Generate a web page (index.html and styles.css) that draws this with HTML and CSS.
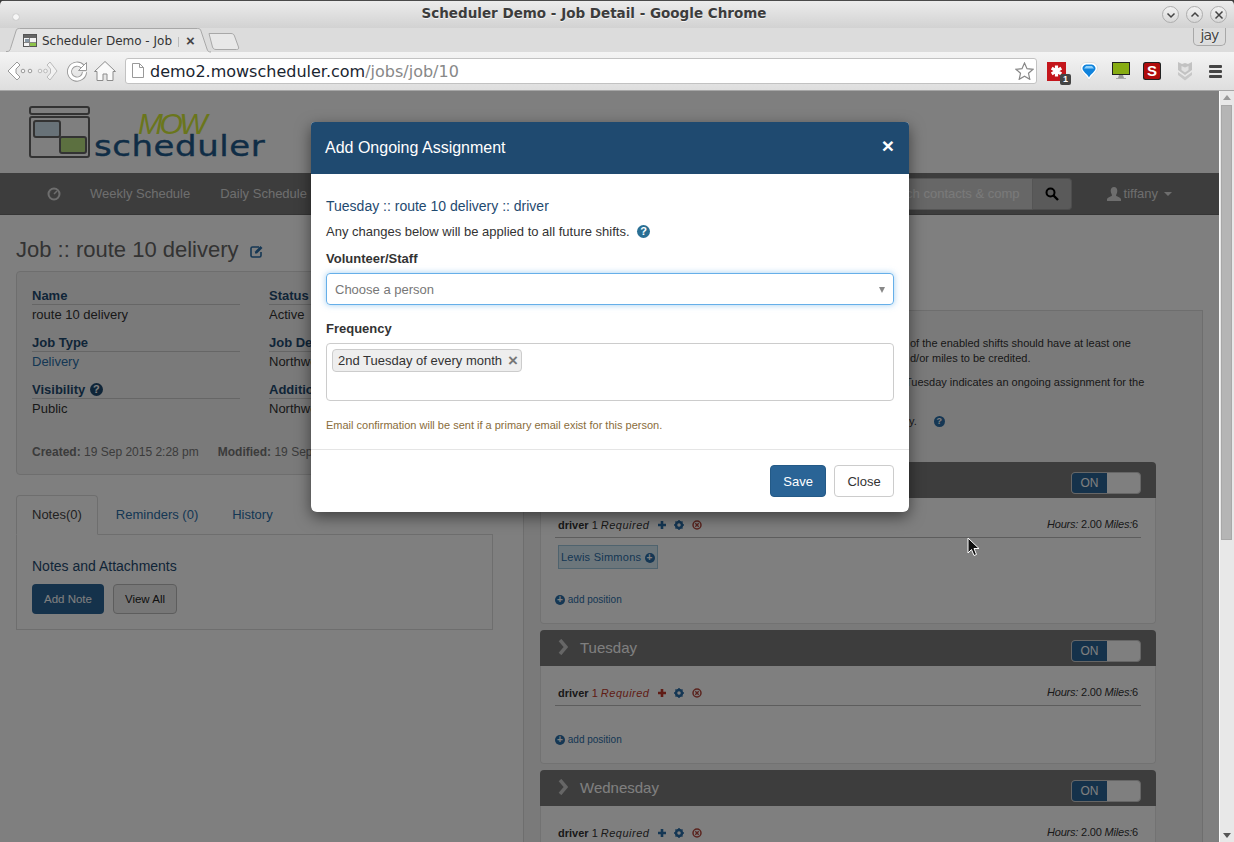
FILE: index.html
```html
<!DOCTYPE html>
<html lang="en">
<head>
    <meta charset="UTF-8">
    <title>Scheduler Demo - Job Detail - Google Chrome</title>
    <link rel="stylesheet" href="styles.css">
</head>
<body>
<div class="window">
    <div class="titlebar">
        <span class="title-dot"></span>
        <span class="title-text">Scheduler Demo - Job Detail - Google Chrome</span>
        <div class="win-buttons">
            <span class="win-btn"><svg width="10" height="10" viewBox="0 0 10 10"><path d="M1.5 3.5 5 7l3.5-3.5" class="win-glyph"/></svg></span>
            <span class="win-btn"><svg width="10" height="10" viewBox="0 0 10 10"><path d="M1.5 6.5 5 3l3.5 3.5" class="win-glyph"/></svg></span>
            <span class="win-btn"><svg width="10" height="10" viewBox="0 0 10 10"><path d="M1.5 1.5l7 7M8.5 1.5l-7 7" class="win-glyph"/></svg></span>
        </div>
    </div>
    <div class="tabbar">
        <div class="tab">
            <svg class="tab-shape" width="206" height="25" viewBox="0 0 206 25"><path d="M0 23.500h1c2 0 3-1 3.500-3L10 3c.5-2 1.500-2.500 3.500-2.500h178c2 0 3 .5 3.500 2.500l6 18c.5 2 1.500 3 4 3" fill="#e4e4e4" stroke="#a8a8a8"/></svg>
            <svg class="favicon" width="14" height="13" viewBox="0 0 14 13"><rect x=".5" y=".5" width="13" height="12" fill="#f4f4f4" stroke="#555"/><rect x="1" y="1" width="12" height="3" fill="#666"/><rect x="2" y="5" width="4" height="3" fill="#8797a5"/><rect x="7" y="8.500" width="6" height="3.500" fill="#8fc44a"/><path d="M6.500 4v8.500M1 8.500h12" stroke="#888"/></svg>
            <span class="tab-title">Scheduler Demo - Job</span>
            <span class="tab-close">×</span>
        </div>
        <svg class="newtab" width="32" height="17" viewBox="0 0 32 17"><path d="M1 .5h22c2 0 3 1 3.500 2.500l4 11c.5 1.500 0 2.500-2 2.500H8c-2 0-3-1-3.500-2.500L1 .5z" fill="#e8e8e8" stroke="#a8a8a8"/></svg>
        <span class="profile">jay</span>
    </div>
    <div class="toolbar">
        <div class="nav-icons">
            <svg width="32" height="24" viewBox="0 0 32 24"><path d="M11 3 2 12l9 9 3-3-4-4V10l4-4z" fill="#fff" stroke="#999"/><circle cx="17" cy="12" r="1.800" fill="#f6f6f6" stroke="#999"/><circle cx="24" cy="12" r="1.800" fill="#f6f6f6" stroke="#999"/></svg>
            <svg class="nav-forward" width="22" height="24" viewBox="0 0 22 24"><path d="M13 3l7 9-7 9-3-3 3.500-4v-4L10 6z" fill="#f2f2f2" stroke="#bbb"/><circle cx="3" cy="12" r="1.800" fill="#f2f2f2" stroke="#bbb"/><circle cx="8.500" cy="12" r="1.800" fill="#f2f2f2" stroke="#bbb"/></svg>
            <svg class="nav-reload" width="22" height="24" viewBox="0 0 22 24"><path d="M16.500 7.500A7.500 7.500 0 1 0 18.500 13" fill="none" stroke="#999" stroke-width="5"/><path d="M16.500 7.500A7.500 7.500 0 1 0 18.500 13" fill="none" stroke="#fff" stroke-width="3.200"/><path d="M12.500 11.500H20.500V3.500z" fill="#fff" stroke="#999"/></svg>
            <svg class="nav-home" width="24" height="24" viewBox="0 0 24 24"><path d="M12 2.500 1.500 12.500H4v9h6V15h4v6.500h6v-9h2.500z" fill="#fafafa" stroke="#8c8c8c"/></svg>
        </div>
        <div class="omnibox">
            <svg width="12" height="15" viewBox="0 0 12 15"><path d="M.5.5h7l4 4v10H.5z" fill="#fff" stroke="#999"/><path d="M7.500.5v4h4" fill="none" stroke="#999"/></svg>
            <span class="url">demo2.mowscheduler.com<span class="url-path">/jobs/job/10</span></span>
            <svg class="star" width="19" height="18" viewBox="0 0 19 18"><path d="M9.500 1l2.500 5.700 6 .6-4.500 4 1.300 6-5.300-3.100-5.300 3.100 1.300-6-4.500-4 6-.6z" fill="#fff" stroke="#888" stroke-width="1.200"/></svg>
        </div>
        <div class="ext-icons">
            <span class="ext ext-lastpass">
                <svg width="19" height="19" viewBox="0 0 19 19"><rect width="19" height="19" fill="#c4161c"/><path d="M9.500 3.500v11M4.700 6.200l9.600 5.600M14.300 6.200l-9.600 5.600" stroke="#fff" stroke-width="3.200"/></svg>
                <span class="ext-badge">1</span>
            </span>
            <svg class="ext" width="18" height="19" viewBox="0 0 18 19"><path d="M9 18.500C6 13 .5 10 .5 6A5.500 5.500 0 0 1 6 .5h6A5.500 5.500 0 0 1 17.500 6C17.500 10 12 13 9 18.500z" fill="#fff" stroke="#ddd"/><path d="M9 15.500C7 11.500 2.500 9.500 2.500 6.500 2.500 4 5 2.500 7 2.500h4c2 0 4.500 1.500 4.500 4 0 3-4.500 5-6.500 9z" fill="#1083dc"/><path d="M6 4h6l2 2.500H4z" fill="#8ed0fa"/></svg>
            <svg class="ext" width="18" height="18" viewBox="0 0 18 18"><rect x=".5" y=".5" width="17" height="12" fill="#87ac12" stroke="#222"/><path d="M7 13h4l1 3H6z" fill="#999"/><path d="M4 16.500h10" stroke="#aaa"/></svg>
            <svg class="ext ext-slim" width="18" height="18" viewBox="0 0 18 18"><rect width="18" height="18" rx="2.500" fill="#222"/><rect x="1" y="1" width="16" height="16" rx="2" fill="#b00c0c"/><text x="9" y="14" text-anchor="middle" class="ext-s">S</text></svg>
            <svg class="ext ext-shield" width="14" height="20" viewBox="0 0 14 20"><path d="M0 1l4 2 3-1 3 1 4-2v8l-7 5-7-5z" fill="#c2c2c2"/><path d="M3.500 5v4l3.500 2.500L10.500 9V5L7 6.500z" fill="#e2e2e2"/><path d="M0 11l7 5 7-5v3l-7 5.500L0 14z" fill="#c8c8c8"/></svg>
            <span class="hamburger"><i></i><i></i><i></i></span>
        </div>
    </div>

    <div class="viewport">
        <div class="page">
            <div class="logo-row">
                <svg class="logo-mark" width="62" height="52" viewBox="0 0 62 52">
                    <rect x="1" y="1" width="59" height="7" rx="2" fill="none" stroke="#666" stroke-width="2"/>
                    <rect x="1" y="11" width="59" height="40" rx="2" fill="none" stroke="#666" stroke-width="2"/>
                    <rect x="5" y="15" width="26" height="16" rx="2" fill="#d0e4f0" stroke="#666" stroke-width="2"/>
                    <rect x="31" y="31" width="26" height="16" rx="2" fill="#b8e080" stroke="#666" stroke-width="2"/>
                </svg>
                <div class="logo-word">
                    <span class="logo-mow">MOW</span>
                    <span class="logo-name">scheduler</span>
                </div>
            </div>
            <nav class="navbar">
                <svg class="nav-clock" width="14" height="14" viewBox="0 0 14 14"><circle cx="7" cy="7" r="5.500" fill="none" stroke="#ddd" stroke-width="2"/><path d="M7 7l3-3M4 5l.1.1" stroke="#ddd" stroke-width="1.500"/></svg>
                <a class="nav-link">Weekly Schedule</a>
                <a class="nav-link">Daily Schedule</a>
                <div class="nav-search">
                    <div class="search-input">Search contacts &amp; comp</div>
                    <div class="search-btn">
                        <svg width="14" height="14" viewBox="0 0 14 14"><circle cx="5.500" cy="5.500" r="4" fill="none" stroke="#000" stroke-width="2"/><path d="M8.500 8.500l4.500 4.500" stroke="#000" stroke-width="2.400"/></svg>
                    </div>
                </div>
                <div class="nav-user">
                    <svg width="14" height="14" viewBox="0 0 14 14"><path d="M7 0c2 0 3.300 1.500 3.300 3.800S9 8 9 8.500c0 1 5 1.500 5 4V14H0v-1.500c0-2.500 5-3 5-4S3.700 6 3.700 3.800 5 0 7 0z" fill="#ddd"/></svg>
                    <span>tiffany</span>
                    <i class="caret"></i>
                </div>
            </nav>

            <div class="content">
                <div class="col-left">
                    <h1 class="job-title">Job :: route 10 delivery
                        <svg width="13" height="13" viewBox="0 0 13 13"><path d="M9 2H2.500A1.500 1.500 0 0 0 1 3.500v7A1.500 1.500 0 0 0 2.500 12h7a1.500 1.500 0 0 0 1.500-1.500V7" fill="none" stroke="#2a6ea8" stroke-width="1.600"/><path d="M5 6.500 10.500 1 12.500 3 7 8.500H5z" fill="#2a6ea8"/></svg>
                    </h1>
                    <div class="well">
                        <div class="field-grid">
                            <div class="field"><div class="field-label">Name</div><div>route 10 delivery</div></div>
                            <div class="field"><div class="field-label">Status</div><div>Active</div></div>
                            <div class="field"><div class="field-label">Job Type</div><div><a class="link">Delivery</a></div></div>
                            <div class="field"><div class="field-label">Job Department</div><div>Northwest</div></div>
                            <div class="field"><div class="field-label">Visibility <span class="help help-dark">?</span></div><div>Public</div></div>
                            <div class="field"><div class="field-label">Additional</div><div>Northwest</div></div>
                        </div>
                        <div class="stamps"><span><b>Created:</b> 19 Sep 2015 2:28 pm</span><span><b>Modified:</b> 19 Sep 2015 2:28 pm</span></div>
                    </div>
                    <div class="tabs">
                        <a class="tab-item active">Notes(0)</a>
                        <a class="tab-item">Reminders (0)</a>
                        <a class="tab-item">History</a>
                    </div>
                    <div class="tab-pane">
                        <h4 class="pane-title">Notes and Attachments</h4>
                        <div class="pane-buttons">
                            <button class="btn btn-primary">Add Note</button>
                            <button class="btn btn-default">View All</button>
                        </div>
                    </div>
                </div>

                <div class="col-right">
                    <div class="shift-panel">
                        <div class="notes">
                            <p class="note-a">of the enabled shifts should have at least one</p>
                            <p class="note-b">d/or miles to be credited.</p>
                            <p class="note-c">Tuesday indicates an ongoing assignment for the</p>
                            <p class="note-d">y. <span class="help">?</span></p>
                        </div>

                        <div class="day-card">
                            <div class="day-head">
                                <svg class="chevron" width="10" height="16" viewBox="0 0 10 16"><path d="M2 1l6 7-6 7" fill="none" stroke="#ccc" stroke-width="3.500"/></svg>
                                <span>Monday</span>
                                <div class="toggle"><span class="toggle-on">ON</span></div>
                            </div>
                            <div class="day-body">
                                <div class="pos-row">
                                    <div><b>driver</b> 1 <em>Required</em>
                                        <svg class="pos-icon" width="10" height="10" viewBox="0 0 10 10"><path d="M5 1v8M1 5h8" stroke="#2a6ea8" stroke-width="2.600"/></svg>
                                        <svg class="pos-icon" width="10" height="10" viewBox="0 0 10 10"><circle cx="5" cy="5" r="3" fill="none" stroke="#2a6ea8" stroke-width="2.500"/><path d="M5 0v10M0 5h10M1.500 1.500l7 7M8.500 1.500l-7 7" stroke="#2a6ea8" stroke-width="1.400" stroke-dasharray="2 6 2"/></svg>
                                        <svg class="pos-icon pos-remove" width="10" height="10" viewBox="0 0 10 10"><circle cx="5" cy="5" r="4" fill="none" stroke="#b5473c" stroke-width="1.500"/><path d="M3.300 3.300l3.400 3.400M6.700 3.300l-3.400 3.400" stroke="#b5473c" stroke-width="1.300"/></svg>
                                    </div>
                                    <div class="pos-hours"><em>Hours:</em> 2.00 <em>Miles:</em>6</div>
                                </div>
                                <div class="assignees"><span class="person">Lewis Simmons <span class="add-dot">+</span></span></div>
                                <a class="add-pos"><span class="add-dot">+</span> add position</a>
                            </div>
                        </div>

                        <div class="day-card">
                            <div class="day-head">
                                <svg class="chevron" width="10" height="16" viewBox="0 0 10 16"><path d="M2 1l6 7-6 7" fill="none" stroke="#ccc" stroke-width="3.500"/></svg>
                                <span>Tuesday</span>
                                <div class="toggle"><span class="toggle-on">ON</span></div>
                            </div>
                            <div class="day-body day-body-empty">
                                <div class="pos-row">
                                    <div><b>driver</b> <span class="short">1 <em>Required</em></span>
                                        <svg class="pos-icon" width="10" height="10" viewBox="0 0 10 10"><path d="M5 1v8M1 5h8" stroke="#c0392b" stroke-width="2.600"/></svg>
                                        <svg class="pos-icon" width="10" height="10" viewBox="0 0 10 10"><circle cx="5" cy="5" r="3" fill="none" stroke="#2a6ea8" stroke-width="2.500"/><path d="M5 0v10M0 5h10M1.500 1.500l7 7M8.500 1.500l-7 7" stroke="#2a6ea8" stroke-width="1.400" stroke-dasharray="2 6 2"/></svg>
                                        <svg class="pos-icon pos-remove" width="10" height="10" viewBox="0 0 10 10"><circle cx="5" cy="5" r="4" fill="none" stroke="#b5473c" stroke-width="1.500"/><path d="M3.300 3.300l3.400 3.400M6.700 3.300l-3.400 3.400" stroke="#b5473c" stroke-width="1.300"/></svg>
                                    </div>
                                    <div class="pos-hours"><em>Hours:</em> 2.00 <em>Miles:</em>6</div>
                                </div>
                                <a class="add-pos"><span class="add-dot">+</span> add position</a>
                            </div>
                        </div>

                        <div class="day-card">
                            <div class="day-head">
                                <svg class="chevron" width="10" height="16" viewBox="0 0 10 16"><path d="M2 1l6 7-6 7" fill="none" stroke="#ccc" stroke-width="3.500"/></svg>
                                <span>Wednesday</span>
                                <div class="toggle"><span class="toggle-on">ON</span></div>
                            </div>
                            <div class="day-body">
                                <div class="pos-row">
                                    <div><b>driver</b> 1 <em>Required</em>
                                        <svg class="pos-icon" width="10" height="10" viewBox="0 0 10 10"><path d="M5 1v8M1 5h8" stroke="#2a6ea8" stroke-width="2.600"/></svg>
                                        <svg class="pos-icon" width="10" height="10" viewBox="0 0 10 10"><circle cx="5" cy="5" r="3" fill="none" stroke="#2a6ea8" stroke-width="2.500"/><path d="M5 0v10M0 5h10M1.500 1.500l7 7M8.500 1.500l-7 7" stroke="#2a6ea8" stroke-width="1.400" stroke-dasharray="2 6 2"/></svg>
                                        <svg class="pos-icon pos-remove" width="10" height="10" viewBox="0 0 10 10"><circle cx="5" cy="5" r="4" fill="none" stroke="#b5473c" stroke-width="1.500"/><path d="M3.300 3.300l3.400 3.400M6.700 3.300l-3.400 3.400" stroke="#b5473c" stroke-width="1.300"/></svg>
                                    </div>
                                    <div class="pos-hours"><em>Hours:</em> 2.00 <em>Miles:</em>6</div>
                                </div>
                            </div>
                        </div>
                    </div>
                </div>
            </div>

            <div class="backdrop">
                <div class="modal">
                    <div class="modal-header">
                        <span>Add Ongoing Assignment</span>
                        <span class="modal-x">×</span>
                    </div>
                    <div class="modal-body">
                        <div class="modal-sub">Tuesday :: route 10 delivery :: driver</div>
                        <div class="modal-hint">Any changes below will be applied to all future shifts. <span class="help help-teal">?</span></div>
                        <label class="form-label">Volunteer/Staff</label>
                        <div class="select-box">
                            <span>Choose a person</span>
                            <i class="select-caret"></i>
                        </div>
                        <label class="form-label freq-label">Frequency</label>
                        <div class="multi-box">
                            <span class="chip">2nd Tuesday of every month <span class="chip-x">×</span></span>
                        </div>
                        <div class="modal-warning">Email confirmation will be sent if a primary email exist for this person.</div>
                    </div>
                    <div class="modal-footer">
                        <button class="btn btn-save">Save</button>
                        <button class="btn btn-close">Close</button>
                    </div>
                </div>
            </div>

            <svg class="cursor" width="13" height="20" viewBox="0 0 13 20"><path d="M1 1v15l3.500-3.500 2.500 6 2.500-1-2.500-6H12z" fill="#111" stroke="#fff"/></svg>
        </div>

        <div class="scrollbar">
            <i class="arrow-up"></i>
            <div class="thumb"></div>
            <i class="arrow-down"></i>
        </div>
    </div>
</div>
</body>
</html>
```

FILE: styles.css
```css
* {
    box-sizing: border-box;
}
html, body {
    margin: 0;
    height: 100%;
    overflow: hidden;
    background-color: #3a3a3a;
}
body {
    font-family: "Liberation Sans", Arial, sans-serif;
    font-size: 13px;
    color: #333;
}
.window {
    width: 1234px;
    height: 842px;
    display: flex;
    flex-direction: column;
    border-radius: 5px 5px 0 0;
    overflow: hidden;
}

/* browser chrome */
.titlebar {
    height: 28px;
    flex: none;
    display: flex;
    align-items: center;
    justify-content: center;
    position: relative;
    border-top: 1px solid #4a4a4a;
    background: linear-gradient(#ececec, #d2d2d2);
}
.title-dot {
    position: absolute;
    left: 13px;
    top: 13px;
    width: 6px;
    height: 6px;
    border-radius: 50%;
    background-color: #f6f6f6;
    box-shadow: 0 0 1px #888;
}
.title-text {
    font-family: "DejaVu Sans", sans-serif;
    font-weight: bold;
    font-size: 13.500px;
    color: #3c3c3c;
    text-shadow: 0 1px 0 #f4f4f4;
    margin: -3px 46px 0 0;
}
.win-buttons {
    position: absolute;
    right: 7px;
    top: 5px;
    display: flex;
    gap: 7px;
}
.win-btn {
    width: 17px;
    height: 17px;
    border-radius: 50%;
    border: 1px solid #adadad;
    background: linear-gradient(#f2f2f2, #d8d8d8);
    display: flex;
    align-items: center;
    justify-content: center;
}
.win-glyph {
    fill: none;
    stroke: #444;
    stroke-width: 1.500;
}
.tabbar {
    height: 24px;
    flex: none;
    display: flex;
    background-color: #dcdcdc;
    position: relative;
}
.tab {
    width: 206px;
    margin-left: 6px;
    position: relative;
    display: flex;
    align-items: center;
    padding: 1px 0 0 17px;
}
.tab-shape {
    position: absolute;
    left: 0;
    top: 0;
}
.favicon {
    position: relative;
    flex: none;
    margin-right: 5px;
}
.tab-title {
    position: relative;
    font-family: "DejaVu Sans", sans-serif;
    font-size: 12px;
    color: #333;
    width: 137px;
    white-space: nowrap;
}
.tab-title::after {
    content: "";
    position: absolute;
    right: 0;
    top: 3px;
    width: 1px;
    height: 10px;
    background-color: #bbb;
}
.tab-close {
    position: relative;
    font-size: 15px;
    font-weight: bold;
    color: #444;
    margin-left: 7px;
}
.newtab {
    margin: 5px 0 0 -4px;
}
.profile {
    position: absolute;
    right: 8px;
    top: 0;
    width: 33px;
    height: 18px;
    border: 1px solid #a8a8a8;
    border-top: none;
    border-radius: 0 0 5px 5px;
    font-family: "DejaVu Sans", sans-serif;
    font-size: 14px;
    letter-spacing: -1px;
    color: #444;
    text-shadow: 0 0 2px #fff;
    text-align: center;
    line-height: 15px;
}
.toolbar {
    height: 39px;
    flex: none;
    display: flex;
    align-items: center;
    padding: 0 12px 0 6px;
    background: linear-gradient(#f4f4f4, #dedede);
    border-bottom: 1px solid #a6a6a6;
}
.nav-icons {
    width: 119px;
    display: flex;
    align-items: center;
}
.nav-forward {
    margin-left: -1px;
}
.nav-reload {
    margin-left: 7px;
}
.nav-home {
    margin-left: 5px;
}
.omnibox {
    width: 912px;
    height: 26px;
    margin-top: -1px;
    display: flex;
    align-items: center;
    gap: 6px;
    padding: 0 2px 0 6px;
    background-color: #fff;
    border: 1px solid #c2c2c2;
    border-radius: 3px;
}
.url {
    font-family: "DejaVu Sans", sans-serif;
    font-size: 16px;
    color: #1a2530;
    flex: 1;
    padding-top: 1px;
    white-space: nowrap;
}
.url-path {
    color: #888;
}
.ext-icons {
    flex: 1;
    display: flex;
    align-items: center;
    padding-left: 10px;
    gap: 14px;
}
.ext {
    flex: none;
    display: block;
}
.ext-slim {
    margin-left: -1px;
}
.ext-shield {
    margin-left: 3px;
}
.ext-lastpass {
    position: relative;
    width: 19px;
    height: 19px;
}
.ext-badge {
    position: absolute;
    right: -5px;
    bottom: -4px;
    width: 11px;
    height: 11px;
    border-radius: 2px;
    background-color: #444;
    color: #fff;
    font-size: 9px;
    font-weight: bold;
    line-height: 11px;
    text-align: center;
}
.ext-s {
    fill: #fff;
    font-family: "Liberation Sans", sans-serif;
    font-size: 15px;
    font-weight: bold;
}
.hamburger {
    display: flex;
    flex-direction: column;
    gap: 2px;
    margin-left: 3px;
}
.hamburger i {
    display: block;
    width: 13px;
    height: 3px;
    background-color: #444;
    border-radius: 1px;
}

/* page under the modal */
.viewport {
    flex: 1;
    display: flex;
    min-height: 0;
}
.page {
    width: 1219px;
    position: relative;
    overflow: hidden;
    background-color: #fff;
}
.logo-row {
    height: 82px;
    display: flex;
    padding: 15px 0 0 29px;
}
.logo-mark {
    flex: none;
}
.logo-word {
    position: relative;
    margin-left: 3px;
    width: 180px;
}
.logo-mow {
    position: absolute;
    left: 44px;
    top: 7px;
    font-family: "Liberation Sans", sans-serif;
    font-style: italic;
    font-size: 30px;
    line-height: 22px;
    color: #d4ec38;
    letter-spacing: -3.500px;
}
.logo-name {
    position: absolute;
    left: 0;
    top: 29px;
    font-family: "DejaVu Sans", sans-serif;
    font-size: 29px;
    line-height: 22px;
    letter-spacing: .5px;
    color: #1f5a8c;
    -webkit-text-stroke: .4px #1f5a8c;
    transform: scaleX(1.17);
    transform-origin: left center;
}
.navbar {
    height: 42px;
    display: flex;
    align-items: center;
    padding: 0 47px 0 47px;
    background-color: #7a7a7a;
    border-bottom: 1px solid #6a6a6a;
}
.nav-clock {
    margin-right: 29px;
}
.nav-link {
    color: #ddd;
    margin-right: 30px;
    white-space: nowrap;
}
.nav-search {
    margin-left: auto;
    display: flex;
    height: 32px;
}
.search-input {
    width: 220px;
    padding-right: 12px;
    text-align: right;
    line-height: 30px;
    color: #f4f4f4;
    background-color: #cfcfcf;
    border: 1px solid #aaa;
    border-radius: 4px 0 0 4px;
}
.search-btn {
    width: 39px;
    display: flex;
    align-items: center;
    justify-content: center;
    background-color: #b4b4b4;
    border: 1px solid #9a9a9a;
    border-left: none;
    border-radius: 0 4px 4px 0;
}
.nav-user {
    display: flex;
    align-items: center;
    gap: 3px;
    margin-left: 35px;
    color: #ddd;
}
.caret {
    width: 0;
    height: 0;
    margin-left: 3px;
    border-left: 4px solid transparent;
    border-right: 4px solid transparent;
    border-top: 4px solid #ddd;
}
.content {
    display: flex;
    padding-left: 16px;
    gap: 30px;
}
.col-left {
    width: 477px;
    flex: none;
}
.job-title {
    margin: 22px 0 9px;
    height: 25px;
    font-weight: normal;
    font-size: 22px;
    line-height: 25px;
    color: #666;
}
.job-title svg {
    margin-left: 5px;
    vertical-align: -1px;
}
.well {
    height: 204px;
    padding: 16px 15px 0;
    background-color: #f5f5f5;
    border: 1px solid #ddd;
    border-radius: 4px;
}
.field-grid {
    display: grid;
    grid-template-columns: 208px 208px;
    column-gap: 29px;
    row-gap: 12px;
}
.field {
    height: 35px;
    line-height: 17px;
    white-space: nowrap;
    overflow: hidden;
}
.field-label {
    font-weight: bold;
    color: #1f4a70;
    height: 17px;
    line-height: 16px;
    border-bottom: 1px solid #ccc;
    margin-bottom: 1px;
}
.link {
    color: #2a6ea8;
}
.stamps {
    display: flex;
    gap: 19px;
    margin-top: 28px;
    font-size: 12px;
    color: #777;
    white-space: nowrap;
}
.tabs {
    display: flex;
    margin-top: 20px;
    height: 40px;
}
.tab-item {
    padding: 11px 15px 0;
    margin-right: 2px;
    color: #2a6ea8;
    border: 1px solid transparent;
}
.tab-item.active {
    color: #444;
    background-color: #fff;
    border-color: #ddd;
    border-bottom-color: #fff;
    border-radius: 4px 4px 0 0;
    position: relative;
}
.tab-pane {
    height: 96px;
    margin-top: -1px;
    padding: 22px 15px 0;
    border: 1px solid #ddd;
}
.pane-title {
    margin: 0 0 9px;
    font-weight: normal;
    font-size: 14px;
    line-height: 18px;
    color: #1f4a70;
}
.pane-buttons {
    display: flex;
    gap: 9px;
}
.btn {
    height: 30px;
    padding: 0 11px;
    font-family: inherit;
    font-size: 11.500px;
    border: 1px solid transparent;
    border-radius: 4px;
}
.btn-primary {
    color: #fff;
    background-color: #2a6496;
}
.btn-default {
    color: #222;
    background-color: #eee;
    border-color: #bbb;
}
.col-right {
    width: 680px;
    flex: none;
    padding-top: 95px;
}
.shift-panel {
    height: 600px;
    padding: 0 46px 0 16px;
    background-color: #f5f5f5;
    border: 1px solid #ddd;
    border-bottom: none;
}
.notes {
    height: 151px;
    padding: 25px 0 0 370px;
    font-size: 11px;
    line-height: 15px;
    white-space: nowrap;
}
.notes p {
    margin: 0 0 9px;
}
.notes .note-a {
    margin-bottom: 0;
}
.notes .note-c {
    margin-left: -5px;
}
.notes .note-d {
    margin: 24px 0 0 -1px;
}
.help {
    display: inline-flex;
    align-items: center;
    justify-content: center;
    width: 11px;
    height: 11px;
    margin-left: 14px;
    border-radius: 50%;
    background-color: #2a6ea8;
    color: #fff;
    font-size: 9px;
    font-weight: bold;
    vertical-align: 1px;
}
.help-dark {
    margin-left: 1px;
    width: 13px;
    height: 13px;
    font-size: 11px;
    background-color: #1f4a70;
}
.help-teal {
    margin-left: 4px;
    width: 13px;
    height: 13px;
    font-size: 11px;
    background-color: #2a6f94;
}
.day-card {
    margin-bottom: 6px;
}
.day-head {
    height: 36px;
    display: flex;
    align-items: center;
    padding: 0 15px 0 18px;
    background-color: #7a7a7a;
    border-radius: 4px 4px 0 0;
    font-size: 15px;
    color: #fff;
}
.chevron {
    margin: -2px 12px 0 0;
}
.day-head > span {
    margin-top: -2px;
}
.toggle {
    margin: 6px 0 0 auto;
    width: 70px;
    height: 22px;
    background-color: #fff;
    border: 1px solid #ccc;
    border-radius: 4px;
    overflow: hidden;
}
.toggle-on {
    display: block;
    width: 35px;
    height: 100%;
    background-color: #2a6496;
    color: #fff;
    font-size: 12px;
    line-height: 20px;
    text-align: center;
}
.day-body {
    height: 126px;
    padding: 20px 14px 0;
    font-size: 11px;
    background-color: #fff;
    border: 1px solid #e4e4e4;
    border-top: none;
    border-radius: 0 0 4px 4px;
}
.day-body-empty {
    height: 98px;
}
.pos-row {
    display: flex;
    justify-content: space-between;
    height: 20px;
    padding: 0 3px;
    line-height: 14px;
    border-bottom: 1px solid #bbb;
}
.pos-row em {
    letter-spacing: .5px;
}
.pos-hours {
    margin-top: -1px;
    letter-spacing: -.2px;
}
.pos-row .pos-hours em {
    letter-spacing: -.2px;
}
.pos-icon {
    margin-left: 4px;
    vertical-align: -1px;
}
.pos-remove {
    margin-left: 5px;
}
.short, .short em {
    color: #c0392b;
}
.assignees {
    height: 55px;
    padding: 7px 3px 0;
}
.person {
    display: inline-block;
    height: 24px;
    padding: 0 2px;
    line-height: 22px;
    letter-spacing: .25px;
    color: #2a6ea8;
    background-color: #d9edf7;
    border: 1px solid #9fc6dc;
}
.add-dot {
    display: inline-block;
    width: 10px;
    height: 10px;
    border-radius: 50%;
    background-color: #2a6ea8;
    color: #fff;
    font-size: 10px;
    font-weight: bold;
    line-height: 10px;
    text-align: center;
}
.add-pos {
    display: block;
    font-size: 10px;
    color: #2a6ea8;
    line-height: 14px;
}
.day-body-empty .add-pos {
    margin-top: 27px;
}

/* modal */
.backdrop {
    position: absolute;
    left: 0;
    top: 0;
    right: 0;
    bottom: 0;
    padding: 31px 0 0 311px;
    background-color: rgba(0, 0, 0, 0.5);
}
.modal {
    width: 598px;
    height: 390px;
    background-color: #fff;
    border-radius: 4px 4px 6px 6px;
    box-shadow: 0 5px 15px rgba(0, 0, 0, 0.5);
    overflow: hidden;
}
.modal-header {
    height: 52px;
    display: flex;
    justify-content: space-between;
    padding: 16px 15px 0 14px;
    background-color: #1f4a70;
    color: #fff;
    font-size: 16px;
    line-height: 20px;
}
.modal-x {
    margin-top: -1px;
    font-size: 21px;
    font-weight: bold;
    line-height: 18px;
}
.modal-body {
    height: 276px;
    padding: 24px 15px 0;
    border-bottom: 1px solid #e5e5e5;
}
.modal-sub {
    font-size: 14px;
    line-height: 16px;
    color: #1f4a70;
}
.modal-hint {
    margin-top: 10px;
    line-height: 16px;
}
.form-label {
    display: block;
    margin-top: 11px;
    font-weight: bold;
    line-height: 16px;
}
.freq-label {
    margin-top: 16px;
}
.select-box {
    height: 32px;
    margin-top: 6px;
    display: flex;
    align-items: center;
    justify-content: space-between;
    padding: 0 8px;
    color: #777;
    border: 1px solid #66afe9;
    border-radius: 4px;
    box-shadow: 0 0 6px rgba(102, 175, 233, 0.6);
}
.select-caret {
    width: 0;
    height: 0;
    margin-top: 2px;
    border-left: 3.500px solid transparent;
    border-right: 3.500px solid transparent;
    border-top: 6px solid #888;
}
.multi-box {
    height: 58px;
    margin-top: 6px;
    padding: 5px;
    border: 1px solid #ccc;
    border-radius: 4px;
}
.chip {
    display: inline-flex;
    align-items: center;
    gap: 6px;
    height: 23px;
    padding: 0 3px 0 5px;
    background-color: #eee;
    border: 1px solid #ccc;
    border-radius: 4px;
}
.chip-x {
    font-size: 17px;
    font-weight: bold;
    color: #777;
}
.modal-warning {
    margin-top: 17px;
    font-size: 11px;
    line-height: 14px;
    color: #8a6d3b;
}
.modal-footer {
    display: flex;
    justify-content: flex-end;
    gap: 8px;
    padding: 15px 15px 0;
}
.modal-footer .btn {
    height: 32px;
    padding: 0 12px;
    font-size: 13px;
}
.btn-save {
    color: #fff;
    background-color: #2a6496;
    border-color: #245a87;
}
.modal-footer .btn-close {
    width: 60px;
    color: #333;
    background-color: #fff;
    border-color: #ccc;
}
.cursor {
    position: absolute;
    left: 967px;
    top: 446px;
}

/* scrollbar */
.scrollbar {
    flex: 1;
    position: relative;
    background-color: #e8e8e8;
    border-left: 1px solid #fafafa;
}
.thumb {
    position: absolute;
    left: 1px;
    top: 14px;
    width: 11px;
    height: 435px;
    background-color: #b5b5b5;
    border: 1px solid #a8a8a8;
}
.arrow-up, .arrow-down {
    position: absolute;
    left: 3px;
    width: 0;
    height: 0;
    border-left: 4px solid transparent;
    border-right: 4px solid transparent;
}
.arrow-up {
    top: 4px;
    border-bottom: 5px solid #999;
}
.arrow-down {
    bottom: 4px;
    border-top: 5px solid #555;
}
```
